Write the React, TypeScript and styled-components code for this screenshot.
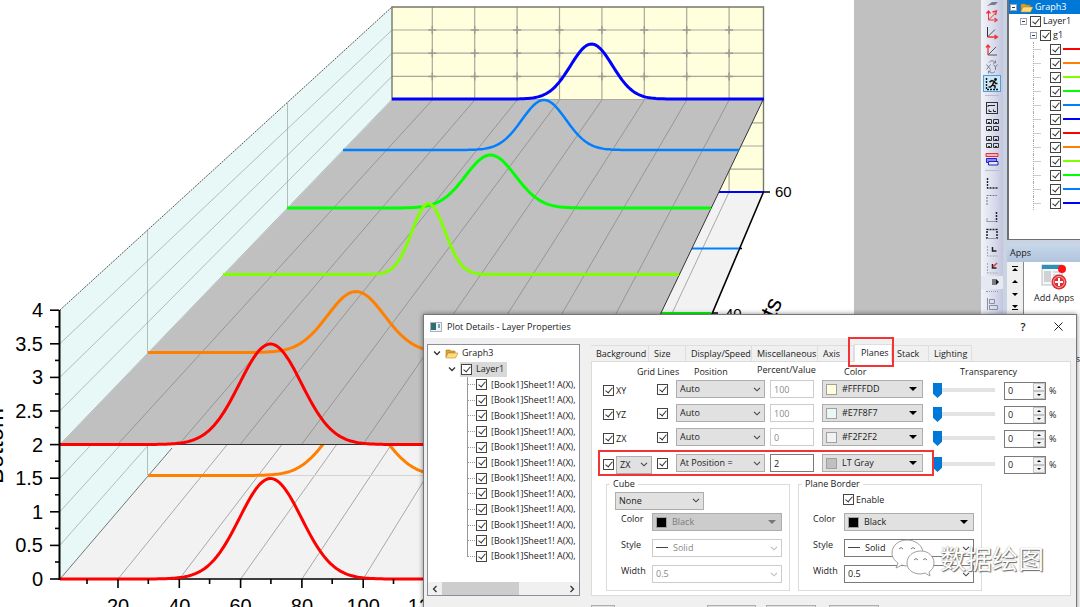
import React from "react";
import styled, { createGlobalStyle, css } from "styled-components";

const Global = createGlobalStyle`
  * { box-sizing: border-box; }
  body { margin: 0; background: #fff; font-family: "Open Sans", "Noto Sans", sans-serif; font-size: 9px; line-height: 12px; color: #1a1a1a; }
  button, input, select { font: inherit; color: inherit; margin: 0; padding: 0; border-radius: 0; }
  ul { list-style: none; margin: 0; padding: 0; }
`;

const arrow = (color: string) =>
  `url("data:image/svg+xml,%3Csvg xmlns='http://www.w3.org/2000/svg' width='8' height='5'%3E%3Cpath d='M1 .8l3 3 3-3' fill='none' stroke='%23${color}' stroke-width='1.1'/%3E%3C/svg%3E")`;

/* ---------- window ---------- */

const Page = styled.div`
  position: relative;
  display: flex;
  height: 100vh;
  overflow: hidden;
`;

const Canvas = styled.svg`
  flex: none;
  display: block;
  background: #fff;
  font-family: "Liberation Sans", Arial, sans-serif;
`;

const Workspace = styled.div`
  flex: 1;
  background: #c0c0c0;
`;

/* ---------- graph ---------- */

const gauss = (x0: number, x1: number, mu: number, s: number, base: number, h: number) => {
  let d = "";
  for (let x = x0; x <= x1; x += 2) {
    const y = base - h * Math.exp(-((x - mu) ** 2) / (2 * s * s));
    d += `${d ? "L" : "M"}${x} ${y.toFixed(2)}`;
  }
  return d + `L${x1} ${base}`;
};

const range = (n: number) => Array.from({ length: n }, (_, i) => i);

const upper = [
  { c: "#0000ff", d: gauss(392, 764, 591.5, 21, 99, 55) },
  { c: "#0080ff", d: gauss(343, 739, 544, 22, 150, 50) },
  { c: "#00ff00", d: gauss(287, 711, 490.5, 25, 208, 53) },
  { c: "#80ff00", d: gauss(223, 679, 428.5, 16.5, 274.5, 71) },
  { c: "#ff8000", d: gauss(148, 642, 356, 28.5, 352.5, 61) },
  { c: "#ff0000", d: gauss(60, 598, 270.5, 31, 444.5, 100.5) },
];

const lower = [
  { c: "#0000ff", d: "M700 192H764" },
  { c: "#0080ff", d: "M690 248.5H739" },
  { c: "#00ff00", d: "M650 313H711" },
  { c: "#ff8000", d: gauss(148, 642, 356, 28.5, 475.5, 61) },
  { c: "#ff0000", d: gauss(60, 598, 270.5, 31, 579, 100.5) },
];

function Graph() {
  return (
    <Canvas width="854" height="607" viewBox="0 0 854 607" role="img" aria-label="Stacked curves in a 3D frame">
      <path d="M60 310L392 7V192L60 579Z" fill="#e7f8f7" />
      <rect x="392" y="7" width="371" height="185" fill="#ffffdd" />
      <path d="M60 579L392 192H763L600 579Z" fill="#f2f2f2" />
      <g stroke="#8d9494" strokeOpacity=".6" strokeWidth="1" fill="none">
        {range(7).map((i) => (
          <path key={i} d={`M60 ${343.6 + 33.6 * i}L392 ${30.1 + 23.1 * i}`} />
        ))}
        <path d="M147.5 230V475M287.5 103V313" />
      </g>
      <g stroke="#a9a99b" strokeWidth="1.2" fill="none">
        {range(7).map((i) => (
          <path key={i} d={`M392 ${30 + 23.2 * i}H763`} />
        ))}
        {range(8).map((i) => (
          <path key={i} d={`M${432.3 + 42.4 * i} 7V192`} />
        ))}
      </g>
      <g stroke="#9c9c94" strokeWidth="1.5">
        {range(8).map((i) =>
          range(3).map((j) => (
            <path key={`${i}-${j}`} d={`M${428.3 + 42.4 * i} ${30 + 23.2 * j}h8m-4-4v8`} />
          ))
        )}
      </g>
      <g stroke="#a8a8a8" strokeWidth="1">
        {range(8).map((i) => (
          <path key={i} d={`M${118 + 61.3 * i} 579L${432.3 + 42.4 * i} 192`} />
        ))}
        <path d="M148 475.5H642" stroke="#d4d4d4" />
      </g>
      <path d="M60 310L392 7" stroke="#555" strokeDasharray="2 1" />
      <path d="M60 579L172 448" stroke="#555" strokeWidth=".8" />
      <path d="M392 192V7H763.5V192" stroke="#77776c" strokeWidth="1.4" fill="none" />
      <path d="M763.5 192L600 579H60" stroke="#000" strokeWidth="1.6" fill="none" />
      <g fill="none">
        {lower.map((l) => (
          <path key={l.c} d={l.d} stroke={l.c} strokeWidth={l.d.includes("H") ? 2 : 3} />
        ))}
      </g>
      <path d="M60 444.5L392 100H763L598 444.5Z" fill="#c0c0c0" />
      <g stroke="#808080" strokeOpacity=".75" strokeWidth=".9">
        {range(8).map((i) => (
          <path key={i} d={`M${118 + 61.3 * i} 444L${432.3 + 42.4 * i} 100`} />
        ))}
      </g>
      <path d="M60 444.5H598L763 100" fill="none" stroke="#333" />
      <g fill="none" strokeLinejoin="round">
        {upper.map((l) => (
          <path key={l.c} d={l.d} stroke={l.c} strokeWidth={l.c === "#0080ff" ? 2.5 : 3} />
        ))}
      </g>
      <g stroke="#000" strokeWidth="1.6">
        <path d="M59.5 310V580" strokeWidth="2" />
        {range(9).map((i) => (
          <path key={i} d={`M50 ${579 - 33.6 * i}H59`} />
        ))}
        {range(8).map((i) => (
          <path key={i} d={`M55 ${562 - 33.6 * i}H59`} />
        ))}
        {range(6).map((i) => (
          <path key={i} d={`M${118 + 61.3 * i} 579V588M${87 + 61.3 * i} 579V584`} />
        ))}
        <path d="M763 192H770M739 248.5H742M712 313H718" />
      </g>
      <g fontSize="20" textAnchor="end">
        {range(9).map((i) => (
          <text key={i} x="43" y={586 - 33.6 * i}>{i / 2}</text>
        ))}
      </g>
      <g fontSize="20" textAnchor="middle">
        {range(6).map((i) => (
          <text key={i} x={118 + 61.3 * i} y="613">{20 + 20 * i}</text>
        ))}
      </g>
      <text x="775" y="197" fontSize="15">60</text>
      <text x="725" y="319" fontSize="15">40</text>
      <text fontSize="24" transform="translate(3 484) rotate(-90)">Bottom</text>
      <text fontSize="24" transform="translate(775 319) rotate(-66)">ts</text>
    </Canvas>
  );
}

/* ---------- tool strip ---------- */

const Strip = styled.div`
  flex: none;
  width: 22px;
  display: flex;
  flex-direction: column;
  align-items: center;
  background: linear-gradient(90deg, #f2f4fa, #d3d6ea 70%, #c2c5dc);
`;

const ToolButton = styled.button<{ $active?: boolean }>`
  width: 18px;
  height: 17px;
  flex: none;
  border: 1px solid ${(p) => (p.$active ? "#4aa0e0" : "transparent")};
  background: ${(p) => (p.$active ? "#cde6f7" : "none")};
  display: flex;
  align-items: center;
  justify-content: center;
`;

const StripEnd = styled.div`
  height: 7px;
  flex: none;
  display: flex;
  align-items: flex-end;
`;

const Divider = styled.div`
  flex: none;
  width: 14px;
  height: 1px;
  margin: 3px 0;
  background: #b9bccb;
`;

const Overflow = styled.div`
  width: 100%;
  height: 13px;
  flex: none;
  padding-right: 4px;
  text-align: right;
  background: #e6e8f2;
`;

const Dots = styled.div`
  width: 12px;
  height: 2px;
  margin: 2px 0;
  flex: none;
  border-top: 1px dotted #999;
`;

const glyphs: Record<string, React.ReactNode> = {
  axes3d: <><path d="M3.500 3v8M3.500 11l7-7M3.500 11H11" stroke="#e33" /><path d="M1.500 4.500l2-2.500 2 2.500M9.500 9l2.500 2-2.500 2M7.500 3l4-1-1 4" stroke="#e33" strokeWidth="1.300" /></>,
  axesL: <><path d="M2.500 1v10" stroke="#333" /><path d="M2.500 11L10 3.500" stroke="#555" /><path d="M2.500 11h9M9.500 9l3 2-3 2" stroke="#e33" strokeWidth="1.300" /></>,
  axesV: <><path d="M3 12h9M3 12l8-8" stroke="#555" /><path d="M3 12V2M1 4.500L3 2l2 2.500" stroke="#e33" strokeWidth="1.300" /></>,
  swap: <><path d="M1.500 4.500l4 5M5.500 4.500l-4 5M8.500 4.500l2 2.500 2-2.500M10.500 7v3M4 2.500c2-2.500 5-2 6 0M10.500.5v2.500H8M10 11.500c-2 2-5 1.500-6 0M3.500 13.500V11H6" stroke="#7c7f88" /></>,
  runner: <><path d="M1.500 1v11.500h11.500" stroke="#111" strokeDasharray="2 1" strokeWidth="1.400" /><path d="M4.500 5l2.500-1.500 2.500 1 1 2h2M9 4.500L7.500 8l2.500 1v2.500M7.500 8L5.500 10H3.500" stroke="#111" strokeWidth="1.500" /><circle cx="10.500" cy="2.500" r="1.400" fill="#111" /></>,
  layout1: <><rect x="1.500" y="1.500" width="11" height="11" stroke="#333" /><path d="M3 6V4.500h7M4 8.500v2h2.500M8.500 8.500v2H11" stroke="#222" /></>,
  layout4: <><path d="M1.500 1.500h5v4h-5zM8.500 1.500h5v4h-5zM1.500 8.500h5v4h-5zM8.500 8.500h5v4h-5z" stroke="#333" /><path d="M3 4.500h2M10 4.500h2M3 11.500h2M10 11.500h2" stroke="#222" /></>,
  stack: <><path d="M1 1.500h12v3H1z" stroke="#d33" fill="#f6b5c0" /><path d="M1.500 6.500h10v4h-10z" stroke="#22d" fill="#88f" /><path d="M3.500 9.500h9.500v3.500H3.500z" stroke="#22a" fill="#e6e8f8" /></>,
  left: <path d="M2.500 2v10h10" stroke="#222" strokeWidth="1.400" strokeDasharray="2 1" />,
  top: <path d="M2 12V2.500h10" stroke="#777" strokeDasharray="2 1" />,
  right: <><path d="M11.500 2v10" stroke="#222" strokeWidth="1.500" strokeDasharray="2 1" /><path d="M2 11.500h9M2 8v4" stroke="#999" /></>,
  box: <><path d="M2 12V2.500h10V12" stroke="#222" strokeWidth="1.500" strokeDasharray="2 1" /><path d="M2 11.500h10" stroke="#999" /></>,
  inset: <><path d="M2.500 2v10h10" stroke="#aaa" strokeDasharray="2 1" /><path d="M7.500 3v4h4" stroke="#222" strokeWidth="1.500" /></>,
  insetRed: <><path d="M2.500 2v10h10" stroke="#aaa" strokeDasharray="2 1" /><path d="M7.500 3v4h4" stroke="#222" strokeWidth="1.500" /><path d="M8 6l4-4" stroke="#e33" strokeWidth="1.500" /></>,
  align: <path d="M2.500 1v12M4.500 2.500h5v4h-5zM4.500 8.500h8v4h-8z" stroke="#8a90a0" />,
};

function Tool({ name, active }: { name: string; active?: boolean }) {
  return (
    <ToolButton type="button" aria-label={name} $active={active}>
      <svg width="14" height="14" viewBox="0 0 14 14" fill="none">{glyphs[name]}</svg>
    </ToolButton>
  );
}

/* ---------- shared controls ---------- */

const Check = styled.input.attrs({ type: "checkbox", defaultChecked: true })`
  appearance: none;
  flex: none;
  position: relative;
  width: 11px;
  height: 11px;
  border: 1px solid #444;
  background: #fff;
  &:checked::after {
    content: "";
    position: absolute;
    left: 3px;
    top: 0;
    width: 3px;
    height: 6px;
    border: solid #333;
    border-width: 0 1px 1px 0;
    transform: rotate(40deg);
  }
`;

const Folder = () => (
  <svg width="13" height="11" viewBox="0 0 13 11">
    <path d="M1 2h4l1 1h4v2H3L1 9z" fill="#d9a336" stroke="#a8781c" strokeWidth=".6" />
    <path d="M3 5h10l-2.500 5H.8z" fill="#ffdb7c" stroke="#b98d2c" strokeWidth=".6" />
  </svg>
);

/* ---------- object manager ---------- */

const SidePanel = styled.aside`
  flex: none;
  width: 77px;
  display: flex;
  flex-direction: column;
  padding-left: 4px;
  background: #c9d3e2;
`;

const ObjectTree = styled.ul`
  height: 240px;
  flex: none;
  overflow: hidden;
  background: #fff;
  border-left: 2px solid #6d6f74;
  border-bottom: 1px solid #6d6f74;
`;

const ObjectRow = styled.li<{ $depth: number; $selected?: boolean }>`
  height: 14px;
  display: flex;
  align-items: center;
  gap: 2px;
  white-space: nowrap;
  padding-left: ${(p) => [1, 11, 21, 40][p.$depth]}px;
  ${(p) =>
    p.$selected &&
    css`
      background: #0078d7;
      color: #fff;
    `}
  ${(p) =>
    p.$depth === 3 &&
    css`
      &::before {
        content: "";
        align-self: stretch;
        width: 7px;
        margin-left: -16px;
        margin-right: 7px;
        border-left: 1px dotted #aaa;
        background: linear-gradient(#ccc, #ccc) 0 7px / 7px 1px no-repeat;
      }
    `}
`;

const Twisty = styled.span`
  flex: none;
  width: 7px;
  height: 7px;
  border: 1px solid #9aa3b0;
  background: linear-gradient(#335, #335) 1px 2px / 3px 1px no-repeat #fff;
  margin-right: 1px;
`;

const Swatch = styled.span<{ $c: string }>`
  flex: 1;
  height: 2px;
  background: ${(p) => p.$c};
`;

const AppsHeader = styled.div`
  height: 18px;
  flex: none;
  margin-top: 4px;
  padding: 3px 3px;
  background: linear-gradient(#c9d8ea, #afc4dc);
`;

const AppsBody = styled.div`
  flex: 1;
  display: flex;
  background: #f0f0f0;
`;

const AppsNav = styled.div`
  width: 17px;
  display: flex;
  flex-direction: column;
  align-items: center;
  border-right: 1px solid #888;
`;

const NavButton = styled.button`
  height: 13px;
  width: 14px;
  border: 0;
  background: none;
  display: flex;
  align-items: center;
  justify-content: center;
`;

const AppTile = styled.div`
  flex: 1;
  background: #fff;
  display: flex;
  flex-direction: column;
  align-items: center;
  padding: 2px 0 0 4px;
  gap: 2px;
  white-space: nowrap;
`;

const Peek = styled.span`
  align-self: flex-end;
  margin-top: 47px;
`;

const curveColors = ["#f00", "#ff8000", "#80ff00", "#0f0", "#0080ff", "#00f"];

/* ---------- dialog ---------- */

const Dialog = styled.section`
  position: absolute;
  left: 423px;
  right: 3px;
  top: 314px;
  height: 320px;
  display: flex;
  flex-direction: column;
  background: #f0f0f0;
  border: 1px solid #777;
  box-shadow: 0 0 5px rgba(0, 0, 0, 0.45);
`;

const TitleBar = styled.header`
  height: 23px;
  flex: none;
  display: flex;
  align-items: center;
  gap: 5px;
  padding: 0 11px 0 6px;
  background: #fff;
`;

const Title = styled.h1`
  flex: 1;
  margin: 0;
  font-size: 9px;
  font-weight: 400;
`;

const TitleButton = styled.button`
  width: 14px;
  height: 16px;
  margin-left: 16px;
  border: 0;
  background: none;
  font-size: 11px;
  font-weight: 600;
`;

const DialogBody = styled.div`
  display: flex;
  gap: 11px;
  padding: 6px 5px 0 3px;
`;

const LayerTree = styled.div`
  flex: none;
  width: 153px;
  height: 252px;
  display: flex;
  flex-direction: column;
  background: #fff;
  border: 1px solid #8a8f99;
`;

const TreeRow = styled.div<{ $depth: number }>`
  height: 16px;
  flex: none;
  display: flex;
  align-items: center;
  gap: 4px;
  padding-left: ${(p) => 5 + p.$depth * 15}px;
`;

const RowLabel = styled.label<{ $selected?: boolean }>`
  display: flex;
  align-items: center;
  gap: 4px;
  height: 15px;
  padding: 0 3px 0 1px;
  background: ${(p) => (p.$selected ? "#d9d9d9" : "none")};
`;

const PlotList = styled.ul`
  height: 187px;
  margin-left: 39px !important;
  display: grid;
  grid-template-rows: repeat(12, 1fr);
  background: linear-gradient(#999, #999) 0 0 / 1px 180px no-repeat;
  overflow: hidden;
`;

const PlotItem = styled.li`
  display: flex;
  align-items: center;
  white-space: nowrap;
  &::before {
    content: "";
    width: 8px;
    border-top: 1px dotted #999;
  }
`;

const Scroller = styled.div`
  display: flex;
  align-items: center;
  height: 13px;
  margin-top: auto;
  background: #f0f0f0;
`;

const ScrollButton = styled.button`
  width: 14px;
  height: 13px;
  border: 0;
  background: none;
  display: flex;
  align-items: center;
  justify-content: center;
`;

const ScrollTrack = styled.div`
  flex: 1;
  height: 13px;
  &::before {
    content: "";
    display: block;
    width: 63%;
    height: 100%;
    background: #cdcdcd;
  }
`;

const Main = styled.div`
  flex: 1;
  min-width: 0;
`;

const Tabs = styled.div`
  display: flex;
  align-items: flex-end;
  height: 17px;
`;

const Tab = styled.button<{ $w: number; $on?: boolean }>`
  position: relative;
  width: ${(p) => p.$w}px;
  height: ${(p) => (p.$on ? 18 : 16)}px;
  margin-bottom: ${(p) => (p.$on ? -1 : 0)}px;
  padding: ${(p) => (p.$on ? "0 0 2px 6px" : "0 0 0 5px")};
  text-align: left;
  border: 1px solid #dedede;
  border-bottom: 0;
  border-left-width: ${(p) => (p.$on ? 1 : 0)}px;
  background: ${(p) => (p.$on ? "#fff" : "#f0f0f0")};
  z-index: ${(p) => (p.$on ? 1 : 0)};
  ${(p) =>
    p.$on &&
    css`
      &::after {
        content: "";
        position: absolute;
        inset: -8px -3px -5px -7px;
        border: 2px solid #f43434;
      }
    `}
`;

const Panel = styled.div`
  height: 235px;
  background: #fff;
  border: 1px solid #dcdcdc;
  padding: 0 6px;
`;

const planeColumns = css`
  display: grid;
  grid-template-columns: 54px 19px 94px 52px 111px 71px 1fr;
  padding-left: 5px;
`;

const Headings = styled.div`
  ${planeColumns}
  height: 15px;
  align-items: center;
  white-space: nowrap;
`;

const Heading = styled.span<{ $shift?: number; $low?: boolean }>`
  margin-left: ${(p) => p.$shift ?? 0}px;
  padding-top: ${(p) => (p.$low ? 4 : 0)}px;
`;

const PlaneRow = styled.div<{ $marked?: boolean }>`
  ${planeColumns}
  position: relative;
  align-items: center;
  height: ${(p) => (p.$marked ? 26 : 24)}px;
  margin-top: ${(p) => (p.$marked ? 1 : 0)}px;
  ${(p) =>
    p.$marked &&
    css`
      &::after {
        content: "";
        position: absolute;
        inset: 0 auto 0 0;
        width: 332px;
        border: 2px solid #f43434;
        pointer-events: none;
      }
    `}
`;

const PlaneName = styled.label`
  display: flex;
  align-items: center;
  gap: 2px;
  padding-top: 3px;
`;

const Picker = styled.select<{ $w: number; $flat?: boolean }>`
  appearance: none;
  width: ${(p) => p.$w}px;
  height: 18px;
  padding-left: 3px;
  border: 1px solid #adadad;
  background: ${arrow("444")} right 3px center no-repeat #e1e1e1;
  ${(p) =>
    p.$flat &&
    css`
      background-color: #fff;
      border-color: #7a7a7a;
    `}
  &:disabled {
    opacity: 1;
    color: #8a8a8a;
    border-color: #ccc;
    background: ${arrow("bbb")} right 3px center no-repeat #fff;
  }
`;

const ValueBox = styled.input<{ $live?: boolean }>`
  width: 44px;
  height: 18px;
  padding: 0 3px;
  border: 1px solid ${(p) => (p.$live ? "#7a7a7a" : "#ccc")};
  background: #fff;
  color: ${(p) => (p.$live ? "#1a1a1a" : "#8a8a8a")};
`;

const ColorButton = styled.button<{ $w: number; $off?: boolean }>`
  width: ${(p) => p.$w}px;
  height: 18px;
  display: flex;
  align-items: center;
  padding: 0 5px 0 3px;
  gap: 5px;
  text-align: left;
  border: 1px solid #adadad;
  background: ${(p) => (p.$off ? "#ccc" : "#e1e1e1")};
  color: ${(p) => (p.$off ? "#7d7d7d" : "#1a1a1a")};
`;

const Chip = styled.span<{ $c: string }>`
  width: 11px;
  height: 11px;
  border: 1px solid #a0a0a0;
  background: ${(p) => p.$c};
`;

const Grow = styled.span`
  flex: 1;
`;

const Slider = styled.input.attrs({ type: "range", min: 0, max: 100, defaultValue: 0 })`
  appearance: none;
  width: 62px;
  height: 16px;
  margin-top: 3px;
  background: linear-gradient(#e3e3e3, #e3e3e3) 0 5px / 100% 4px no-repeat;
  &::-webkit-slider-thumb {
    appearance: none;
    width: 9px;
    height: 15px;
    background: #0078d7;
    clip-path: polygon(0 0, 100% 0, 100% 72%, 50% 100%, 0 72%);
  }
`;

const Spin = styled.label`
  display: flex;
  align-items: center;
  gap: 3px;
  padding-top: 3px;
`;

const SpinBox = styled.span`
  display: flex;
  width: 42px;
  height: 18px;
  border: 1px solid #7a7a7a;
  background: #fff;
`;

const SpinInput = styled.input`
  flex: 1;
  min-width: 0;
  padding: 0 3px;
  border: 0;
`;

const SpinButtons = styled.span`
  width: 12px;
  display: grid;
  grid-template-rows: 1fr 1fr;
`;

const SpinButton = styled.button`
  border: 1px solid #c4c4c4;
  background: #f0f0f0;
  display: flex;
  align-items: center;
  justify-content: center;
`;

const Groups = styled.div`
  display: flex;
  gap: 8px;
  padding: 2px 0 0 8px;
`;

const Group = styled.fieldset`
  width: 184px;
  height: 113px;
  margin: 0;
  padding: 0 7px 0 8px;
  border: 1px solid #dcdcdc;
`;

const Legend = styled.legend`
  padding: 0 3px;
  margin-left: -5px;
`;

const GroupTop = styled.div<{ $indent?: number }>`
  height: 23px;
  display: flex;
  align-items: center;
  padding: 0 0 2px ${(p) => p.$indent ?? 0}px;
`;

const EnableLabel = styled.label`
  display: flex;
  align-items: center;
  gap: 2px;
  padding-bottom: 2px;
`;

const Field = styled.div`
  display: flex;
  justify-content: space-between;
  height: 26px;
  padding-left: 6px;
`;

const StyleBox = styled.span`
  position: relative;
  display: flex;
  select { padding-left: 20px; }
  &::before {
    content: "";
    position: absolute;
    left: 4px;
    top: 8px;
    width: 12px;
    border-top: 1px solid #444;
  }
`;

const Footer = styled.footer`
  display: flex;
  gap: 10px;
  padding: 9px 0 0 167px;
`;

const PushButton = styled.button<{ $w: number; $gap?: number }>`
  width: ${(p) => p.$w}px;
  height: 18px;
  margin-right: ${(p) => p.$gap ?? 0}px;
  border: 1px solid #adadad;
  background: #e1e1e1;
`;

const Triangle = ({ size = 8, up = false, color = "#000" }) => (
  <svg width={size} height={size / 2} viewBox="0 0 8 4">
    <path d={up ? "M0 4h8L4 0z" : "M0 0h8L4 4z"} fill={color} />
  </svg>
);

const Chevron = ({ turn = 0 }) => (
  <svg width="8" height="8" viewBox="0 0 8 8">
    <path d="M1 2.500l3 3 3-3" fill="none" stroke="#333" strokeWidth="1.300" transform={`rotate(${turn} 4 4)`} />
  </svg>
);

const planes = [
  { name: "XY", pos: "Auto", value: "100", label: "#FFFFDD", color: "#ffffdd" },
  { name: "YZ", pos: "Auto", value: "100", label: "#E7F8F7", color: "#e7f8f7" },
  { name: "ZX", pos: "Auto", value: "0", label: "#F2F2F2", color: "#f2f2f2" },
  { name: "ZX", pos: "At Position =", value: "2", label: "LT Gray", color: "#c0c0c0", marked: true },
];

const tabs: [string, number][] = [
  ["Background", 58], ["Size", 37], ["Display/Speed", 66], ["Miscellaneous", 66],
  ["Axis", 36], ["Planes", 38], ["Stack", 37], ["Lighting", 43],
];

function LineFields({ id, off }: { id: string; off?: boolean }) {
  return (
    <>
      <Field>
        <label htmlFor={`${id}-color`}>Color</label>
        <ColorButton id={`${id}-color`} type="button" $w={130} $off={off} disabled={off}>
          <Chip $c="#000" />
          Black
          <Grow />
          <Triangle color={off ? "#777" : "#000"} />
        </ColorButton>
      </Field>
      <Field>
        <label htmlFor={`${id}-style`}>Style</label>
        <StyleBox>
          <Picker id={`${id}-style`} $w={130} $flat disabled={off}><option>Solid</option></Picker>
        </StyleBox>
      </Field>
      <Field>
        <label htmlFor={`${id}-width`}>Width</label>
        <Picker id={`${id}-width`} $w={130} $flat disabled={off}><option>0.5</option></Picker>
      </Field>
    </>
  );
}

function PlotDetails() {
  return (
    <Dialog role="dialog" aria-labelledby="dlg-title">
      <TitleBar>
        <svg width="12" height="10" viewBox="0 0 12 10">
          <rect x=".5" y=".5" width="11" height="9" fill="#eef3f5" stroke="#a9b4ba" />
          <rect x="1" y="1" width="5" height="7" fill="#2f6f73" />
          <rect x="8" y="2" width="2" height="4" fill="#7aa0c8" />
        </svg>
        <Title id="dlg-title">Plot Details - Layer Properties</Title>
        <TitleButton type="button" aria-label="Help">?</TitleButton>
        <TitleButton type="button" aria-label="Close">
          <svg width="9" height="9" viewBox="0 0 9 9"><path d="M.5.5l8 8m0-8l-8 8" stroke="#222" /></svg>
        </TitleButton>
      </TitleBar>
      <DialogBody>
        <LayerTree>
          <TreeRow $depth={0}><Chevron /><Folder />Graph3</TreeRow>
          <TreeRow $depth={1}><Chevron /><RowLabel $selected><Check />Layer1</RowLabel></TreeRow>
          <PlotList>
            {range(12).map((i) => (
              <PlotItem key={i}><RowLabel><Check />[Book1]Sheet1! A(X),</RowLabel></PlotItem>
            ))}
          </PlotList>
          <Scroller>
            <ScrollButton type="button" aria-label="Scroll left"><Chevron turn={90} /></ScrollButton>
            <ScrollTrack />
            <ScrollButton type="button" aria-label="Scroll right"><Chevron turn={-90} /></ScrollButton>
          </Scroller>
        </LayerTree>
        <Main>
          <Tabs role="tablist">
            {tabs.map(([t, w]) => (
              <Tab key={t} type="button" role="tab" $w={w} $on={t === "Planes"} aria-selected={t === "Planes"}>{t}</Tab>
            ))}
          </Tabs>
          <Panel>
            <Headings>
              <span />
              <Heading $shift={-20} $low>Grid Lines</Heading>
              <Heading $shift={18} $low>Position</Heading>
              <Heading $shift={-13}>Percent/Value</Heading>
              <Heading $shift={22} $low>Color</Heading>
              <Heading $shift={27} $low>Transparency</Heading>
            </Headings>
            {planes.map((p, i) => (
              <PlaneRow key={i} $marked={p.marked}>
                {p.marked ? (
                  <PlaneName as="span">
                    <Check aria-label="Show plane" />
                    <Picker $w={36} aria-label="Plane"><option>ZX</option></Picker>
                  </PlaneName>
                ) : (
                  <PlaneName><Check />{p.name}</PlaneName>
                )}
                <Check aria-label="Grid lines" />
                <Picker $w={89} aria-label="Position"><option>{p.pos}</option></Picker>
                <ValueBox $live={p.marked} disabled={!p.marked} aria-label="Value" defaultValue={p.value} />
                <ColorButton type="button" $w={101}>
                  <Chip $c={p.color} />
                  {p.label}
                  <Grow />
                  <Triangle />
                </ColorButton>
                <Slider aria-label="Transparency" />
                <Spin>
                  <SpinBox>
                    <SpinInput defaultValue="0" aria-label="Transparency percent" />
                    <SpinButtons>
                      <SpinButton type="button" aria-label="Increase"><Triangle size={4} up /></SpinButton>
                      <SpinButton type="button" aria-label="Decrease"><Triangle size={4} /></SpinButton>
                    </SpinButtons>
                  </SpinBox>
                  %
                </Spin>
              </PlaneRow>
            ))}
            <Groups>
              <Group>
                <Legend>Cube</Legend>
                <GroupTop>
                  <Picker $w={89} aria-label="Cube"><option>None</option></Picker>
                </GroupTop>
                <LineFields id="cube" off />
              </Group>
              <Group>
                <Legend>Plane Border</Legend>
                <GroupTop $indent={36}>
                  <EnableLabel><Check />Enable</EnableLabel>
                </GroupTop>
                <LineFields id="border" />
              </Group>
            </Groups>
          </Panel>
        </Main>
      </DialogBody>
      <Footer>
        <PushButton type="button" aria-label="More" $w={24} $gap={82} />
        <PushButton type="button" aria-label="OK" $w={49} />
        <PushButton type="button" aria-label="Cancel" $w={50} $gap={3} />
        <PushButton type="button" aria-label="Apply" $w={50} />
      </Footer>
    </Dialog>
  );
}

const Watermark = styled.div`
  position: absolute;
  right: 36px;
  top: 539px;
  display: flex;
  align-items: center;
  gap: 5px;
  font: 26px/38px "Noto Sans CJK SC", sans-serif;
  color: #fff;
  text-shadow: 1px 1px 1px #666, 0 0 1px #777;
`;

export default function App() {
  return (
    <>
      <Global />
      <Page>
        <Graph />
        <Workspace />
        <Strip>
          <StripEnd>
            <svg width="14" height="6" viewBox="0 0 14 6"><path d="M2 5l5-4h6l-3 3H6z" fill="#777c88" /></svg>
          </StripEnd>
          <Tool name="axes3d" />
          <Tool name="axesL" />
          <Tool name="axesV" />
          <Tool name="swap" />
          <Tool name="runner" active />
          <Divider />
          <Tool name="layout1" />
          <Tool name="layout4" />
          <Tool name="layout4" />
          <Tool name="stack" />
          <Divider />
          <Tool name="left" />
          <Tool name="top" />
          <Tool name="right" />
          <Tool name="box" />
          <Tool name="inset" />
          <Tool name="insetRed" />
          <Overflow>
            <svg width="7" height="6" viewBox="0 0 7 6"><path d="M1 0v6M3 0v6" stroke="#111" /><path d="M4 0l3 3-3 3z" fill="#111" /></svg>
          </Overflow>
          <Dots />
          <Tool name="align" />
        </Strip>
        <SidePanel>
          <ObjectTree>
            <ObjectRow $depth={0} $selected><Twisty /><Folder />Graph3</ObjectRow>
            <ObjectRow $depth={1}><Twisty /><Check aria-label="Layer1" />Layer1</ObjectRow>
            <ObjectRow $depth={2}><Twisty /><Check aria-label="g1" />g1</ObjectRow>
            {range(12).map((i) => (
              <ObjectRow key={i} $depth={3}>
                <Check aria-label={`Plot ${i + 1}`} />
                <Swatch $c={curveColors[i % 6]} />
              </ObjectRow>
            ))}
          </ObjectTree>
          <AppsHeader>Apps</AppsHeader>
          <AppsBody>
            <AppsNav>
              <NavButton type="button" aria-label="First"><svg width="6" height="5"><path d="M0 0h6v1H0zM0 5h6L3 2z" /></svg></NavButton>
              <NavButton type="button" aria-label="Previous"><Triangle size={6} up /></NavButton>
              <NavButton type="button" aria-label="Next"><Triangle size={6} /></NavButton>
              <NavButton type="button" aria-label="Last"><svg width="6" height="5"><path d="M0 4h6v1H0zM0 0h6L3 3z" /></svg></NavButton>
            </AppsNav>
            <AppTile>
              <svg width="26" height="26" viewBox="0 0 26 26">
                <rect x="1" y="1" width="20" height="20" fill="#f4f6f7" stroke="#b9c0c4" />
                <rect x="1" y="1" width="20" height="4" fill="#2b93b5" />
                <rect x="3" y="7" width="7" height="11" fill="#cfd3d6" />
                <path d="M12 8h7M12 11h7M12 14h4" stroke="#bcd" />
                <circle cx="21" cy="5" r="4" fill="#f11" />
                <circle cx="18" cy="18" r="7.500" fill="#e02b33" />
                <circle cx="18" cy="18" r="5.500" fill="none" stroke="#fff" strokeWidth=".6" />
                <path d="M18 14v8M14 18h8" stroke="#fff" strokeWidth="2" />
              </svg>
              Add Apps
              <Peek>s</Peek>
            </AppTile>
          </AppsBody>
        </SidePanel>
        <PlotDetails />
        <Watermark>
          <svg width="44" height="38" viewBox="0 0 44 38" fill="#fff" stroke="#888" strokeWidth=".8">
            <path d="M16 1C7 1 1 7 1 14c0 4 2 7 6 10l-2 5 6-3c2 1 5 1 7 1 9 0 14-6 14-13S25 1 16 1z" />
            <path d="M30 12c-8 0-14 5-14 12s6 11 14 11l4-1 5 3-1-4c3-2 5-5 5-9 0-7-6-12-13-12z" />
            <path d="M8 10q2-3 4 0M20 10q2-3 4 0M23 21q2-3 4 0M32 21q2-3 4 0" fill="none" stroke="#555" />
          </svg>
          数据绘图
        </Watermark>
      </Page>
    </>
  );
}
